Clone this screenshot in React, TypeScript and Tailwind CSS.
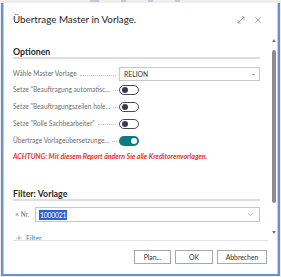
import { ChevronDown, Plus, X } from "lucide-react";

const font = "font-['Lato','Liberation_Sans',sans-serif]";

function Leader() {
    return <div className="flex-1 min-w-[5px] mx-[3px] mt-[3px] border-b border-dotted border-[#c4c4c4]" />;
}

function Toggle({ on }: { on?: boolean }) {
    if (on) {
        return (
            <div className="w-[20px] h-[10px] rounded-full bg-[#0d7a85] flex items-center justify-end pr-[2px]">
                <div className="w-[6px] h-[6px] rounded-full bg-white" />
            </div>
        );
    }
    return (
        <div className="w-[20px] h-[10px] rounded-full border border-[#4a4a55] bg-white flex items-center pl-[1.5px]">
            <div className="w-[6px] h-[6px] rounded-full bg-[#3b3b48]" />
        </div>
    );
}

function ToggleRow({ label, on }: { label: string; on?: boolean }) {
    return (
        <div className="h-[17px] flex items-center">
            <div className="w-[106px] flex items-center text-[6.6px] text-[#707070] whitespace-nowrap">
                <span>{label}</span>
                <Leader />
            </div>
            <Toggle on={on} />
        </div>
    );
}

export default function App() {
    return (
        <div className={`w-[281px] h-[277px] bg-[#eeeeee] flex flex-col overflow-hidden ${font}`}>
            {/* page behind the dialog */}
            <div className="h-[3px] shrink-0 flex items-start gap-[22px] pl-[90px]">
                <div className="w-[9px] h-[2px] bg-[#c5cbd6]" />
                <div className="w-[5px] h-[2px] bg-[#c5cbd6]" />
                <div className="w-[5px] h-[2px] bg-[#c5cbd6]" />
                <div className="w-[5px] h-[2px] bg-[#c5cbd6]" />
            </div>
            <div className="flex-1 flex ml-px mr-px mb-px border-l-2 border-r-2 border-b-2 border-[#6690d8]">
                <div className="flex-1 flex flex-col bg-white border-l border-r border-[#cfcfcf]">
                    {/* header */}
                    <div className="h-[33px] shrink-0 flex items-center pl-[9px] pr-[14px]">
                        <div className="text-[9.8px] text-[#1e1e1e] flex-1">Übertrage Master in Vorlage.</div>
                        <svg width="8" height="8" viewBox="0 0 8 8" className="mr-[8px]" fill="none" stroke="#8a8a8a" strokeWidth="0.8">
                            <path d="M1 7 L7 1 M4.5 1 H7 V3.5 M1 4.5 V7 H3.5" />
                        </svg>
                        <X className="w-[10px] h-[10px] text-[#6a6a6a]" strokeWidth={1.5} />
                    </div>
                    {/* body */}
                    <div className="h-[204px] shrink-0 flex overflow-hidden">
                        <div className="w-[247px] ml-[9px] pt-[10px]">
                            <div className="h-[11px] leading-[11px] text-[8.8px] font-bold text-[#2a2a2a]">Optionen</div>
                            <div className="h-[2px] bg-[#dddddd]" />
                            <div className="mt-[8px] h-[14px] flex items-center">
                                <div className="w-[106px] flex items-center text-[6.6px] text-[#707070] whitespace-nowrap">
                                    <span>Wähle Master Vorlage</span>
                                    <Leader />
                                </div>
                                <div className="flex-1 h-[14px] border border-[#c9c9c9] flex items-center pl-[4px] pr-[5px] text-[6.8px] text-[#333]">
                                    <span className="flex-1">RELION</span>
                                    <span className="text-[#888] tracking-[-1px]">···</span>
                                </div>
                            </div>
                            <ToggleRow label={'Setze "Beauftragung automatisc...'} />
                            <ToggleRow label={'Setze "Beauftragungszeilen hole...'} />
                            <ToggleRow label={'Setze "Rolle Sachbearbeiter"'} />
                            <ToggleRow label="Übertrage Vorlageübersetzunge..." on />
                            <div className="h-[14px] flex items-center text-[7px] font-bold italic text-[#e8302e] whitespace-nowrap">
                                ACHTUNG: Mit diesem Report ändern Sie alle Kreditorenvorlagen.
                            </div>
                            <div className="mt-[25px] h-[11px] leading-[11px] text-[8.8px] font-bold text-[#2a2a2a]">Filter: Vorlage</div>
                            <div className="h-[2px] bg-[#dddddd]" />
                            <div className="mt-[6px] h-[15px] flex items-center">
                                <div className="w-[22px] flex items-center pl-[2px] text-[6.6px] text-[#777]">
                                    <span className="mr-[2px]">×</span>
                                    <span>Nr.</span>
                                </div>
                                <div className="flex-1 h-[15px] border border-[#9fd6d6] flex items-center pl-[3px] pr-[4px]">
                                    <span className="flex-1 flex">
                                        <span className="bg-[#2c5fd2] text-white text-[6.8px] leading-[10px] px-px tracking-[-0.2px]">1000021</span>
                                    </span>
                                    <ChevronDown className="w-[9px] h-[9px] text-[#8a8a8a]" strokeWidth={1.5} />
                                </div>
                            </div>
                            <div className="mt-[10px] h-[12px] flex items-center pl-[2px] text-[6.8px] text-[#2a8f9a]">
                                <Plus className="w-[8px] h-[8px] mr-[3px]" strokeWidth={1.5} />
                                <span>Filter</span>
                            </div>
                        </div>
                        {/* scrollbar */}
                        <div className="ml-[11px] w-[6px] flex flex-col items-center pt-[3px]">
                            <div className="w-0 h-0 border-l-[2.5px] border-r-[2.5px] border-b-[3px] border-l-transparent border-r-transparent border-b-[#777]" />
                            <div className="mt-[8px] w-[3.5px] h-[153px] rounded-full bg-[#8c8c8c]" />
                            <div className="mt-[28px] w-0 h-0 border-l-[2.5px] border-r-[2.5px] border-t-[3px] border-l-transparent border-r-transparent border-t-[#777]" />
                        </div>
                    </div>
                    {/* footer */}
                    <div className="mx-[9px] h-px shrink-0 bg-[#e2e2e2]" />
                    <div className="flex-1 flex justify-end items-start pt-[9px] pr-[10px] gap-[4px]">
                        <button className="w-[37px] h-[14px] border border-[#a8a8a8] bg-white text-[6.8px] text-[#333]">Plan...</button>
                        <button className="w-[38px] h-[14px] border border-[#a8a8a8] bg-white text-[6.8px] text-[#333]">OK</button>
                        <button className="w-[50px] h-[14px] border border-[#a8a8a8] bg-white text-[6.8px] text-[#333]">Abbrechen</button>
                    </div>
                </div>
            </div>
        </div>
    );
}
